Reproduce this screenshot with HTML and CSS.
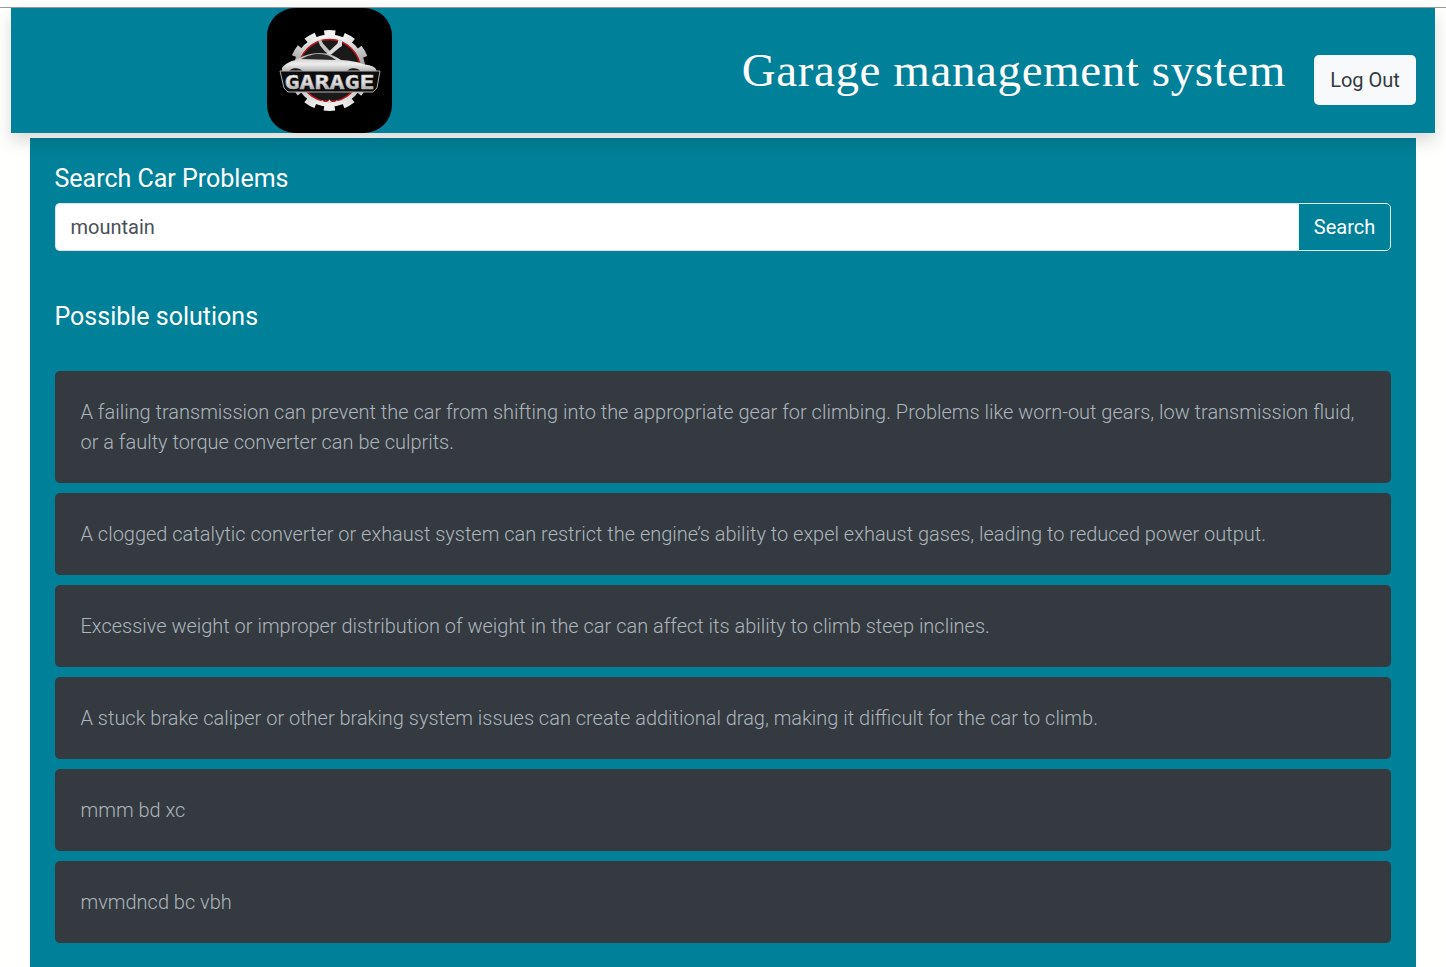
FILE: index.html
```html
<!DOCTYPE html>
<html lang="en">
<head>
<meta charset="utf-8">
<title>Garage management system</title>
<link rel="stylesheet" href="styles.css">
</head>
<body>
<div class="topline"></div>
<header class="header">
  <div class="logo">
    <svg viewBox="0 0 125 125" width="125" height="125" class="logo-svg">
      <defs>
        <linearGradient id="metal" x1="0" y1="0" x2="0" y2="1">
          <stop offset="0" stop-color="#f4f4f4"/>
          <stop offset=".5" stop-color="#8a8a8a"/>
          <stop offset="1" stop-color="#eeeeee"/>
        </linearGradient>
        <linearGradient id="body" x1="0" y1="0" x2="0" y2="1">
          <stop offset="0" stop-color="#b0b0b0"/>
          <stop offset=".55" stop-color="#eeeeee"/>
          <stop offset="1" stop-color="#a5a5a5"/>
        </linearGradient>
        <linearGradient id="letters" x1="0" y1="0" x2="0" y2="1">
          <stop offset="0" stop-color="#ffffff"/>
          <stop offset=".6" stop-color="#d8d8d8"/>
          <stop offset="1" stop-color="#969696"/>
        </linearGradient>
      </defs>
      <circle cx="62.5" cy="62.500" r="36.5" fill="none" stroke="url(#metal)" stroke-width="8" stroke-dasharray="10.6 8.51" stroke-dashoffset="5.3"/>
      <circle cx="62.5" cy="62.500" r="33.5" fill="none" stroke="url(#metal)" stroke-width="5"/>
      <circle cx="62.5" cy="62.500" r="31" fill="#1a1a1a" stroke="#c4151a" stroke-width="1.5"/>
      <path d="M51 32l3-.5 2 4 5 5.500 3 3-2.500 2.500-4-3.500-4.500-5.500z" fill="#c4c4c4"/>
      <path d="M75 33l-3.500-1.500-1 4-8 7.500-4 4 2.500 2 5-4 6-5 3-2z" fill="#dcdcdc"/>
      <path d="M15 60c3-4 8-7 14-8 5-3 12-7 24-7 9 0 15 3 21 7 9 .5 17 2 22 4 5 1 11 2 13 5l1 4H15z" fill="url(#body)"/>
      <path d="M34 51c6-3 11-5 19-5 6 0 11 2 16 6z" fill="#2a2a2a"/>
      <path d="M22 64c1-5 12-5 14 0zM80 64c1-5 12-5 14 0z" fill="#1a1a1a"/>
      <path d="M13 63h100l-3 17-4 4H21l-4-4z" fill="#0c0c0c" stroke="#b0b0b0" stroke-width="1"/>
      <text x="62.5" y="80.500" class="logo-text" text-anchor="middle" textLength="90" lengthAdjust="spacingAndGlyphs">GARAGE</text>
      <text x="62.500" y="96" class="logo-stars" text-anchor="middle">• ✦ •</text>
    </svg>
  </div>
  <h1 class="title">Garage management system</h1>
  <button class="logout">Log Out</button>
</header>
<main class="panel">
  <h2 class="label">Search Car Problems</h2>
  <div class="search">
    <input class="search-input" type="text" value="mountain">
    <button class="search-btn">Search</button>
  </div>
  <h2 class="solutions">Possible solutions</h2>
  <ul class="list">
    <li class="item">A failing transmission can prevent the car from shifting into the appropriate gear for climbing. Problems like worn-out gears, low transmission fluid, or a faulty torque converter can be culprits.</li>
    <li class="item">A clogged catalytic converter or exhaust system can restrict the engine’s ability to expel exhaust gases, leading to reduced power output.</li>
    <li class="item">Excessive weight or improper distribution of weight in the car can affect its ability to climb steep inclines.</li>
    <li class="item">A stuck brake caliper or other braking system issues can create additional drag, making it difficult for the car to climb.</li>
    <li class="item">mmm bd xc</li>
    <li class="item">mvmdncd bc vbh</li>
  </ul>
</main>
</body>
</html>
```
FILE: styles.css
```css
* { box-sizing: border-box; }
html, body { margin: 0; height: 100%; overflow: hidden; }
body {
  background: #fffffd;
  font-family: Roboto, "Liberation Sans", sans-serif;
  padding: 0;
}
.topline { height: 8px; border-bottom: 1px solid #9a9a9a; background: #fdfdfb; }
.header {
  position: relative;
  z-index: 1;
  margin: 0 11px;
  height: 125px;
  background: #008099;
  display: flex;
  align-items: center;
  padding: 0 19px 0 256px;
  box-shadow: 0 8px 16px rgba(0,0,0,.15);
}
.logo { width: 125px; height: 125px; border-radius: 28px; background: #000; overflow: hidden; flex: none; }
.logo-svg { display: block; }
.logo-text { font-family: "DejaVu Sans Mono", monospace; font-weight: 700; font-size: 19px; fill: url(#letters); stroke: #bbb; stroke-width: .5; }
.logo-stars { font-family: "DejaVu Sans", sans-serif; font-size: 7px; fill: #ddd; }
.title {
  margin: 0 28px 2px auto;
  font-family: "Liberation Serif", serif;
  font-weight: 400;
  font-size: 47px;
  letter-spacing: .6px;
  color: #fff;
}
.logout {
  width: 102px;
  height: 50px;
  margin-top: 18px;
  border: 0;
  border-radius: 5px;
  background: #f8f9fa;
  color: #343a40;
  font: 400 20px Roboto, sans-serif;
}
.panel {
  margin: 5px 30px 0;
  height: 829px;
  background: #008099;
  padding: 26px 25px 0 24.5px;
}
.label, .solutions { margin: 0; font-weight: 400; font-size: 25px; line-height: 30px; color: #fff; }
.search { display: flex; height: 48px; margin-top: 9px; }
.search-input {
  flex: 1;
  border: 1px solid #dee2e6;
  border-right: 0;
  border-radius: 5px 0 0 5px;
  background: #fff;
  padding: 0 15px;
  font: 400 20px Roboto, sans-serif;
  color: #495057;
}
.search-btn {
  width: 93px;
  border: 1px solid #dff;
  border-radius: 0 5px 5px 0;
  background: #008099;
  color: #fff;
  font: 400 20px Roboto, sans-serif;
}
.solutions { margin-top: 51px; }
.list { list-style: none; margin: 39px 0 0; padding: 0; display: flex; flex-direction: column; gap: 10px; }
.item {
  background: #343a40;
  border-radius: 5px;
  padding: 26px;
  font-weight: 300;
  font-size: 19.98px;
  line-height: 30px;
  color: #adb5bd;
}
```
